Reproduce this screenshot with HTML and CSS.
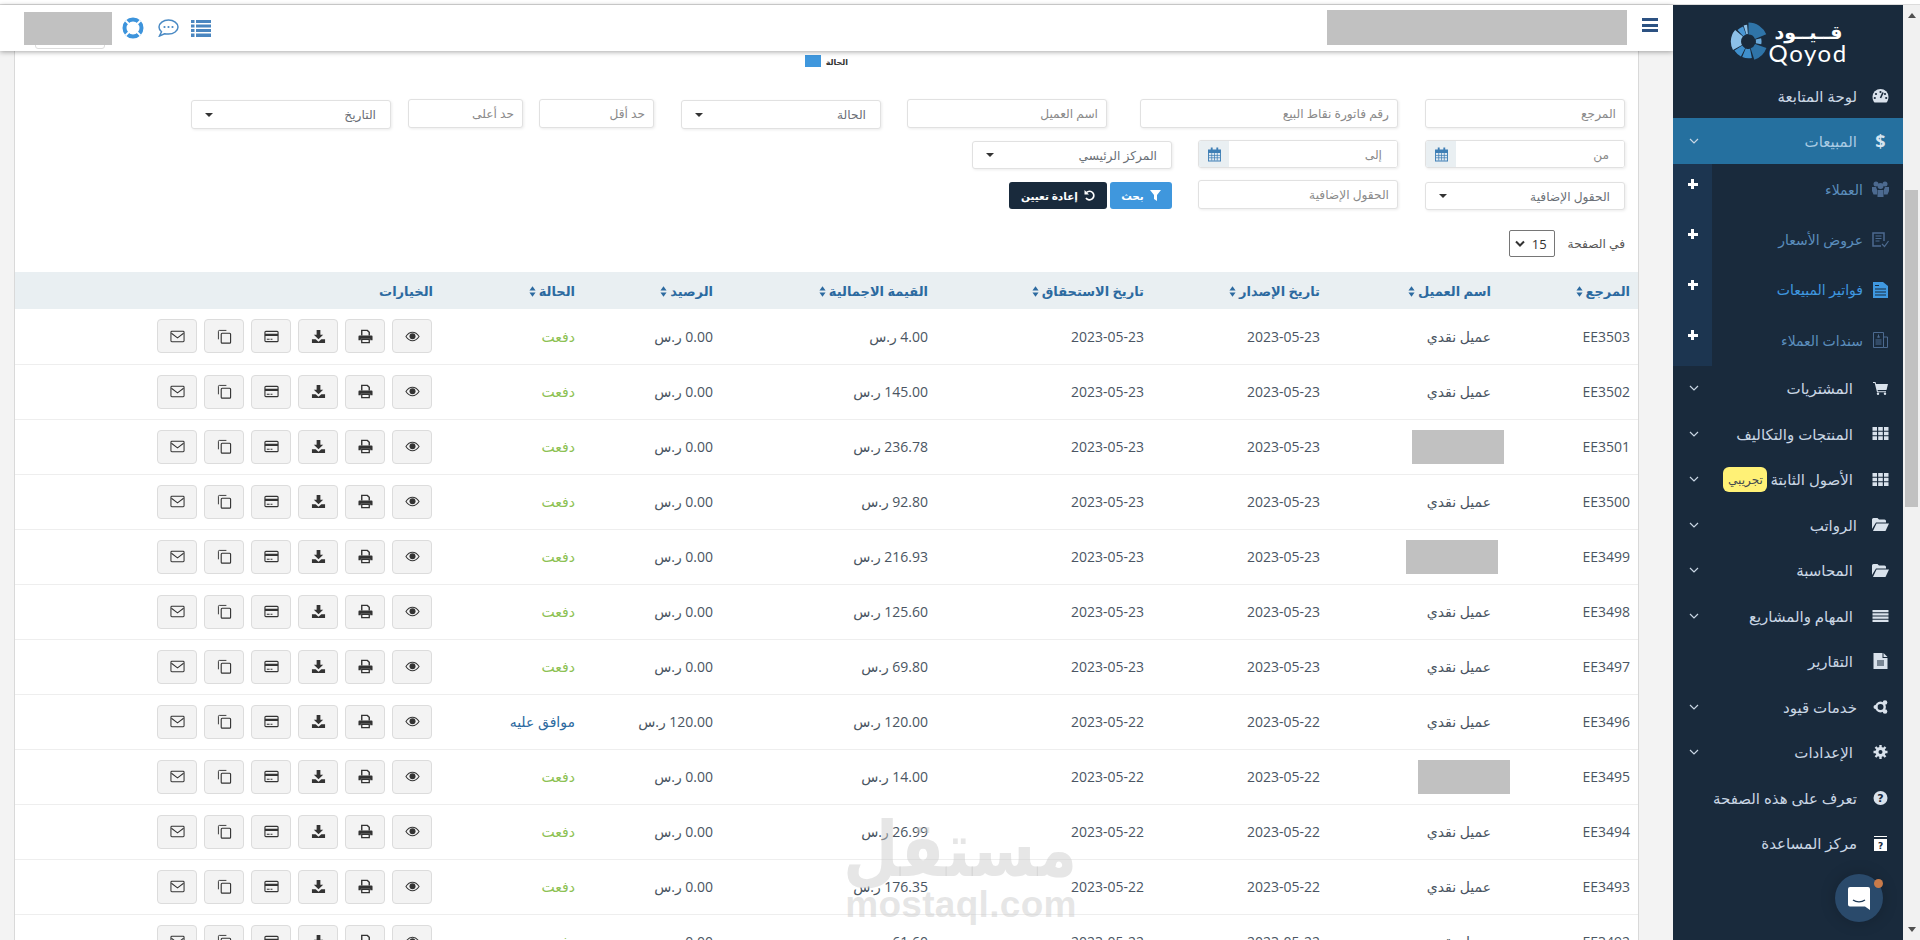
FILE: index.html
```html
<!DOCTYPE html>
<html lang="ar" dir="rtl">
<head>
<meta charset="utf-8">
<title>قيود - فواتير المبيعات</title>
<link rel="stylesheet" href="styles.css">
</head>
<body>
<svg class="defs" width="0" height="0" aria-hidden="true">
  <symbol id="i-eye" viewBox="0 0 16 16"><path d="M1 8c2-3 4.300-4.500 7-4.500S13 5 15 8c-2 3-4.300 4.500-7 4.500S3 11 1 8z" fill="none" stroke="currentColor" stroke-width="1.100"/><circle cx="8" cy="7.800" r="3.200" fill="currentColor"/></symbol>
  <symbol id="i-print" viewBox="0 0 16 16"><path d="M4 7V1.500h6l2 2V7" fill="none" stroke="currentColor" stroke-width="1.500"/><path d="M1.500 7h13a1 1 0 0 1 1 1v4h-2.500v-1.500H3V12H.5V8a1 1 0 0 1 1-1z" fill="currentColor"/><path d="M4 11h8v3.500H4z" fill="none" stroke="currentColor" stroke-width="1.400"/></symbol>
  <symbol id="i-down" viewBox="0 0 16 16"><path d="M6 1h4v5h3L8 11 3 6h3z" fill="currentColor"/><path d="M1 11h4l3 2.500 3-2.500h4v4H1z" fill="currentColor"/></symbol>
  <symbol id="i-card" viewBox="0 0 16 16"><rect x="1" y="2.500" width="14" height="11" rx="1" fill="none" stroke="currentColor" stroke-width="1.200"/><path d="M1 5h14v2.500H1zM3 10.500h3v1H3zM7 10.500h2v1H7z" fill="currentColor"/></symbol>
  <symbol id="i-copy" viewBox="0 0 16 16"><path d="M10 1.500H2.500a1 1 0 0 0-1 1V11" fill="none" stroke="currentColor" stroke-width="1"/><rect x="4.500" y="4.500" width="10" height="10.500" rx="1" fill="none" stroke="currentColor" stroke-width="1.200"/></symbol>
  <symbol id="i-mail" viewBox="0 0 16 16"><rect x="1" y="2.500" width="14" height="11" rx="1" fill="none" stroke="currentColor" stroke-width="1.100"/><path d="M1.500 4.500 8 9.500l6.500-5" fill="none" stroke="currentColor" stroke-width="1.100"/></symbol>
  <symbol id="i-sort" viewBox="0 0 8 12"><path d="M4 0l3.500 4.800h-7zM4 12L.5 7.200h7z" fill="currentColor"/></symbol>
  <symbol id="i-chev" viewBox="0 0 10 6"><path d="M1 1l4 4 4-4" fill="none" stroke="currentColor" stroke-width="1.200"/></symbol>
  <symbol id="i-chev-bold" viewBox="0 0 10 7"><path d="M1 1.500l4 4 4-4" fill="none" stroke="currentColor" stroke-width="2"/></symbol>
  <symbol id="i-grid" viewBox="0 0 16 13"><path d="M0 0h4.500v3.700H0zM5.700 0h4.600v3.700H5.700zM11.500 0H16v3.700h-4.500zM0 4.700h4.500v3.600H0zM5.700 4.700h4.600v3.600H5.700zM11.500 4.700H16v3.600h-4.500zM0 9.300h4.500V13H0zM5.700 9.300h4.600V13H5.700zM11.500 9.300H16V13h-4.500z" fill="currentColor"/></symbol>
  <symbol id="i-folder" viewBox="0 0 17 13"><path d="M0 1.500A1.500 1.500 0 0 1 1.500 0h4l1.500 1.500h5.500A1.500 1.500 0 0 1 14 3v1.500H4L0 11z" fill="currentColor"/><path d="M4.500 5.500H17l-3.500 7.500H1z" fill="currentColor"/></symbol>
</svg>

<div class="topline"></div>
<div class="app">
  <div class="scrollbar">
    <span class="arrow arrow-up"></span>
    <span class="thumb"></span>
    <span class="arrow arrow-down"></span>
  </div>

  <aside class="sidebar">
    <div class="logo">
      <svg class="logo-mark" width="41" height="41" viewBox="0 0 44 44">
        <g fill="none">
          <circle cx="22" cy="22" r="14" stroke="#2f74a8" stroke-width="13" pathLength="360" stroke-dasharray="68 292" stroke-dashoffset="0" transform="rotate(-90 22 22)"/>
          <circle cx="22" cy="22" r="11" stroke="#6aa9da" stroke-width="6" pathLength="360" stroke-dasharray="28 332" stroke-dashoffset="-75" transform="rotate(-90 22 22)"/>
          <circle cx="22" cy="22" r="14" stroke="#2f74a8" stroke-width="13" pathLength="360" stroke-dasharray="52 308" stroke-dashoffset="-110" transform="rotate(-90 22 22)"/>
          <circle cx="22" cy="22" r="13" stroke="#3f8fcc" stroke-width="10" pathLength="360" stroke-dasharray="34 326" stroke-dashoffset="-168" transform="rotate(-90 22 22)"/>
          <circle cx="22" cy="22" r="13" stroke="#3f8fcc" stroke-width="10" pathLength="360" stroke-dasharray="30 330" stroke-dashoffset="-207" transform="rotate(-90 22 22)"/>
          <circle cx="22" cy="22" r="13.500" stroke="#8cc0e8" stroke-width="11" pathLength="360" stroke-dasharray="70 290" stroke-dashoffset="-241" transform="rotate(-90 22 22)"/>
          <circle cx="22" cy="22" r="12.500" stroke="#4a97d4" stroke-width="9" pathLength="360" stroke-dasharray="24 336" stroke-dashoffset="-316" transform="rotate(-90 22 22)"/>
          <circle cx="22" cy="22" r="13" stroke="#8cc0e8" stroke-width="10" pathLength="360" stroke-dasharray="12 348" stroke-dashoffset="-343" transform="rotate(-90 22 22)"/>
        </g>
      </svg>
      <div class="logo-text">
        <span class="logo-ar">قــيــود</span>
        <span class="logo-en">Qoyod</span>
      </div>
    </div>
    <nav class="menu">
      <a class="item item-first">
        <svg class="ico" width="16" height="14" viewBox="0 0 16 14"><path d="M8 0a8 8 0 0 1 8 8c0 2.200-.8 4.200-2 5.500H2C.8 12.200 0 10.200 0 8a8 8 0 0 1 8-8z" fill="currentColor"/><circle cx="8" cy="3" r="1.100" fill="#192a3c"/><circle cx="3.500" cy="5" r="1.100" fill="#192a3c"/><circle cx="12.500" cy="5" r="1.100" fill="#192a3c"/><circle cx="2.300" cy="9" r="1.100" fill="#192a3c"/><circle cx="13.700" cy="9" r="1.100" fill="#192a3c"/><path d="M10.500 3.500 8 9" stroke="#192a3c" stroke-width="1.600"/></svg>
        <span class="label">لوحة المتابعة</span>
      </a>
      <a class="item item-active">
        <span class="ico dollar">$</span>
        <span class="label">المبيعات</span>
        <svg class="chev"><use href="#i-chev"/></svg>
      </a>
      <div class="sub">
        <a class="sub-item">
          <svg class="sub-ico" width="17" height="16" viewBox="0 0 17 16"><circle cx="4" cy="3" r="2.500" fill="currentColor"/><circle cx="13" cy="3" r="2.500" fill="currentColor"/><circle cx="8.500" cy="5" r="3" fill="currentColor"/><path d="M0 6h4l1 2.500v5H1.500L0 10zM17 6h-4l-1 2.500v5h3.500L17 10zM5.500 9h6v7h-6z" fill="currentColor"/></svg>
          <span class="sub-label">العملاء</span>
          <span class="plus-cell"><span class="plus"></span></span>
        </a>
        <a class="sub-item">
          <svg class="sub-ico" width="17" height="16" viewBox="0 0 17 16"><path d="M12 9V1H1v13h8" fill="none" stroke="currentColor" stroke-width="1.500"/><path d="M3.500 4h6M3.500 6.500h6M3.500 9h4" stroke="currentColor"/><path d="M10 12l2.500 2.500L16.500 9" fill="none" stroke="currentColor" stroke-width="1.200"/></svg>
          <span class="sub-label">عروض الأسعار</span>
          <span class="plus-cell"><span class="plus"></span></span>
        </a>
        <a class="sub-item sub-current">
          <svg class="sub-ico" width="15" height="16" viewBox="0 0 15 16"><path d="M0 0h10l5 4v12H0z" fill="currentColor"/><path d="M2 7h11M2 10h11M2 13h11M6 3.500H2" stroke="#192a3c" stroke-width="1.200"/></svg>
          <span class="sub-label">فواتير المبيعات</span>
          <span class="plus-cell"><span class="plus"></span></span>
        </a>
        <a class="sub-item">
          <svg class="sub-ico" width="16" height="16" viewBox="0 0 16 16"><path d="M1 .5h10v15H1zM11 5h4v10.500h-4" fill="none" stroke="currentColor"/><path d="M3 8h6M3 10h6M3 12h6M4.500 5h3M6 2.500v3" stroke="currentColor"/></svg>
          <span class="sub-label">سندات العملاء</span>
          <span class="plus-cell"><span class="plus"></span></span>
        </a>
      </div>
      <a class="item">
        <svg class="ico" width="15" height="13" viewBox="0 0 15 13"><path d="M0 0h2.500l.6 2H15l-1.500 6H4.600l.3 1.300H13v1H4L1.700 1H0z" fill="currentColor"/><circle cx="5" cy="11.800" r="1.200" fill="currentColor"/><circle cx="12" cy="11.800" r="1.200" fill="currentColor"/></svg>
        <span class="label label-in">المشتريات</span>
        <svg class="chev"><use href="#i-chev"/></svg>
      </a>
      <a class="item">
        <svg class="ico" width="16" height="13"><use href="#i-grid"/></svg>
        <span class="label label-in">المنتجات والتكاليف</span>
        <svg class="chev"><use href="#i-chev"/></svg>
      </a>
      <a class="item">
        <svg class="ico" width="16" height="13"><use href="#i-grid"/></svg>
        <span class="label label-in">الأصول الثابتة</span>
        <span class="badge">تجريبي</span>
        <svg class="chev"><use href="#i-chev"/></svg>
      </a>
      <a class="item">
        <svg class="ico" width="17" height="13"><use href="#i-folder"/></svg>
        <span class="label">الرواتب</span>
        <svg class="chev"><use href="#i-chev"/></svg>
      </a>
      <a class="item">
        <svg class="ico" width="17" height="13"><use href="#i-folder"/></svg>
        <span class="label label-in">المحاسبة</span>
        <svg class="chev"><use href="#i-chev"/></svg>
      </a>
      <a class="item">
        <svg class="ico" width="16" height="12" viewBox="0 0 16 12"><path d="M0 0h16v2.200H0zM0 3.300h16v2.200H0zM0 6.600h16v2.200H0zM0 9.800h16V12H0z" fill="currentColor"/></svg>
        <span class="label label-in">المهام والمشاريع</span>
        <svg class="chev"><use href="#i-chev"/></svg>
      </a>
      <a class="item">
        <svg class="ico" width="14" height="16" viewBox="0 0 14 16"><path d="M0 0h9v5h5v11H0z" fill="currentColor"/><path d="M10 0l4 4h-4z" fill="currentColor"/><path d="M3.500 8h7M3.500 10h7M3.500 12h7" stroke="#192a3c"/></svg>
        <span class="label label-in">التقارير</span>
      </a>
      <a class="item">
        <svg class="ico" width="14" height="14" viewBox="0 0 14 14"><circle cx="7" cy="7" r="4.200" fill="none" stroke="currentColor" stroke-width="2.400"/><circle cx="11.500" cy="2.500" r="2.300" fill="currentColor"/><circle cx="11.500" cy="11.500" r="2.300" fill="currentColor"/><circle cx="2" cy="7" r="2" fill="currentColor"/></svg>
        <span class="label">خدمات قيود</span>
        <svg class="chev"><use href="#i-chev"/></svg>
      </a>
      <a class="item">
        <svg class="ico" width="14" height="14" viewBox="0 0 14 14"><circle cx="7" cy="7" r="3.600" fill="none" stroke="currentColor" stroke-width="3"/><path d="M7 0v14M0 7h14M2 2l10 10M12 2L2 12" stroke="currentColor" stroke-width="2.400"/><circle cx="7" cy="7" r="2" fill="#192a3c"/></svg>
        <span class="label label-in">الإعدادات</span>
        <svg class="chev"><use href="#i-chev"/></svg>
      </a>
      <a class="item">
        <svg class="ico" width="14" height="14" viewBox="0 0 14 14"><circle cx="7" cy="7" r="7" fill="currentColor"/><text x="7" y="11" text-anchor="middle" class="ico-q">?</text></svg>
        <span class="label">تعرف على هذه الصفحة</span>
      </a>
      <a class="item">
        <svg class="ico" width="13" height="15" viewBox="0 0 13 15"><path d="M0 3h13v12H0z" fill="#fff"/><path d="M0 .5h13" stroke="#fff"/><text x="6.500" y="13" text-anchor="middle" class="ico-h">?</text></svg>
        <span class="label">مركز المساعدة</span>
      </a>
    </nav>
  </aside>

  <main class="main">
    <header class="header">
      <button class="burger" aria-label="menu"><span></span><span></span><span></span></button>
      <div class="redact redact-company"></div>
      <div class="header-tools">
        <svg width="20" height="17" viewBox="0 0 20 17" class="tool tool-list"><path d="M0 0h3.500v3H0zM5 0h15v3H5zM0 4.500h3.500v3H0zM5 4.500h15v3H5zM0 9h3.500v3H0zM5 9h15v3H5zM0 13.500h3.500V17H0zM5 13.500h15V17H5z" fill="currentColor"/></svg>
        <svg width="21" height="18" viewBox="0 0 21 18" class="tool tool-chat"><path d="M10.500 1C5.300 1 1 4.100 1 8c0 1.900 1 3.500 2.500 4.800L1.500 17l5-2.300c1.200.3 2.600.4 4 .4 5.200 0 9.500-3.200 9.500-7.100S15.700 1 10.500 1z" fill="none" stroke="currentColor" stroke-width="1.500"/><circle cx="6.500" cy="8" r="1.100" fill="currentColor"/><circle cx="10.500" cy="8" r="1.100" fill="currentColor"/><circle cx="14.500" cy="8" r="1.100" fill="currentColor"/></svg>
        <svg width="22" height="22" viewBox="0 0 22 22" class="tool tool-ring"><circle cx="11" cy="11" r="8.500" fill="none" stroke="currentColor" stroke-width="4"/><path d="M3.500 3.500l4 4M18.500 3.500l-4 4M3.500 18.500l4-4M18.500 18.500l-4-4" stroke="#fff" stroke-width="1.800"/></svg>
        <div class="account">
          <span class="account-box"></span>
          <div class="redact redact-account"></div>
        </div>
      </div>
    </header>

    <section class="panel">
      <div class="legend"><span class="legend-text">الحالة</span><span class="legend-swatch"></span></div>

      <div class="filter-row row-one">
        <input class="field w-200" placeholder="المرجع">
        <input class="field w-258 ms-27" placeholder="رقم فاتورة نقاط البيع">
        <input class="field w-200 ms-33" placeholder="اسم العميل">
        <div class="select w-200 ms-26"><span>الحالة</span><i class="caret"></i></div>
        <input class="field w-115 ms-27" placeholder="حد أقل">
        <input class="field w-115 ms-16" placeholder="حد أعلى">
        <div class="select w-200 ms-17"><span>التاريخ</span><i class="caret"></i></div>
      </div>
      <div class="filter-row row-two">
        <div class="date w-200"><input class="date-input" placeholder="من"><span class="addon"><svg width="13" height="15" viewBox="0 0 14 15"><path d="M0 2h14v13H0z" fill="#3f7fb5"/><path d="M1 6h12v8H1z" fill="#dfe9f1"/><path d="M1 8.500h12M1 11h12M4 6v8M7 6v8M10 6v8" stroke="#3f7fb5" stroke-width=".8"/><path d="M3 0h2v3H3zM9 0h2v3H9z" fill="#3f7fb5"/></svg></span></div>
        <div class="date w-200 ms-27"><input class="date-input" placeholder="إلى"><span class="addon"><svg width="13" height="15" viewBox="0 0 14 15"><path d="M0 2h14v13H0z" fill="#3f7fb5"/><path d="M1 6h12v8H1z" fill="#dfe9f1"/><path d="M1 8.500h12M1 11h12M4 6v8M7 6v8M10 6v8" stroke="#3f7fb5" stroke-width=".8"/><path d="M3 0h2v3H3zM9 0h2v3H9z" fill="#3f7fb5"/></svg></span></div>
        <div class="select w-200 ms-26"><span>المركز الرئيسي</span><i class="caret"></i></div>
      </div>
      <div class="filter-row row-three">
        <div class="select w-200"><span>الحقول الإضافية</span><i class="caret"></i></div>
        <input class="field field-up w-200 ms-27" placeholder="الحقول الإضافية">
        <div class="actions ms-26">
          <button class="btn btn-search"><svg width="11" height="11" viewBox="0 0 11 11"><path d="M0 0h11L7 5v6L4 9V5z" fill="#fff"/></svg>بحث</button>
          <button class="btn btn-reset"><svg width="11" height="11" viewBox="0 0 11 11"><path d="M2.500 2.500A4.300 4.300 0 1 1 2 8" fill="none" stroke="#fff" stroke-width="1.700"/><path d="M.5 0v4.500H5z" fill="#fff"/></svg>إعادة تعيين</button>
        </div>
      </div>
      <div class="per-page">
        <span>في الصفحة</span>
        <div class="page-size"><span class="num">15</span><svg width="10" height="7"><use href="#i-chev-bold"/></svg></div>
      </div>

      <table class="grid">
        <colgroup><col class="c1"><col class="c2"><col class="c3"><col class="c4"><col class="c5"><col class="c6"><col class="c7"><col></colgroup>
        <thead>
          <tr>
            <th>المرجع<svg class="sort"><use href="#i-sort"/></svg></th>
            <th>اسم العميل<svg class="sort"><use href="#i-sort"/></svg></th>
            <th>تاريخ الإصدار<svg class="sort"><use href="#i-sort"/></svg></th>
            <th>تاريخ الاستحقاق<svg class="sort"><use href="#i-sort"/></svg></th>
            <th>القيمة الاجمالية<svg class="sort"><use href="#i-sort"/></svg></th>
            <th>الرصيد<svg class="sort"><use href="#i-sort"/></svg></th>
            <th>الحالة<svg class="sort"><use href="#i-sort"/></svg></th>
            <th>الخيارات</th>
          </tr>
        </thead>
        <tbody>
          <tr><td>EE3503</td><td>عميل نقدي</td><td>2023-05-23</td><td>2023-05-23</td><td>4.00 ر.س</td><td>0.00 ر.س</td><td class="paid">دفعت</td><td class="ops"><a class="op"><svg><use href="#i-eye"/></svg></a><a class="op"><svg><use href="#i-print"/></svg></a><a class="op"><svg><use href="#i-down"/></svg></a><a class="op"><svg><use href="#i-card"/></svg></a><a class="op"><svg><use href="#i-copy"/></svg></a><a class="op"><svg><use href="#i-mail"/></svg></a></td></tr>
          <tr><td>EE3502</td><td>عميل نقدي</td><td>2023-05-23</td><td>2023-05-23</td><td>145.00 ر.س</td><td>0.00 ر.س</td><td class="paid">دفعت</td><td class="ops"><a class="op"><svg><use href="#i-eye"/></svg></a><a class="op"><svg><use href="#i-print"/></svg></a><a class="op"><svg><use href="#i-down"/></svg></a><a class="op"><svg><use href="#i-card"/></svg></a><a class="op"><svg><use href="#i-copy"/></svg></a><a class="op"><svg><use href="#i-mail"/></svg></a></td></tr>
          <tr><td>EE3501</td><td class="hid"><span class="redact redact-a"></span></td><td>2023-05-23</td><td>2023-05-23</td><td>236.78 ر.س</td><td>0.00 ر.س</td><td class="paid">دفعت</td><td class="ops"><a class="op"><svg><use href="#i-eye"/></svg></a><a class="op"><svg><use href="#i-print"/></svg></a><a class="op"><svg><use href="#i-down"/></svg></a><a class="op"><svg><use href="#i-card"/></svg></a><a class="op"><svg><use href="#i-copy"/></svg></a><a class="op"><svg><use href="#i-mail"/></svg></a></td></tr>
          <tr><td>EE3500</td><td>عميل نقدي</td><td>2023-05-23</td><td>2023-05-23</td><td>92.80 ر.س</td><td>0.00 ر.س</td><td class="paid">دفعت</td><td class="ops"><a class="op"><svg><use href="#i-eye"/></svg></a><a class="op"><svg><use href="#i-print"/></svg></a><a class="op"><svg><use href="#i-down"/></svg></a><a class="op"><svg><use href="#i-card"/></svg></a><a class="op"><svg><use href="#i-copy"/></svg></a><a class="op"><svg><use href="#i-mail"/></svg></a></td></tr>
          <tr><td>EE3499</td><td class="hid"><span class="redact redact-b"></span></td><td>2023-05-23</td><td>2023-05-23</td><td>216.93 ر.س</td><td>0.00 ر.س</td><td class="paid">دفعت</td><td class="ops"><a class="op"><svg><use href="#i-eye"/></svg></a><a class="op"><svg><use href="#i-print"/></svg></a><a class="op"><svg><use href="#i-down"/></svg></a><a class="op"><svg><use href="#i-card"/></svg></a><a class="op"><svg><use href="#i-copy"/></svg></a><a class="op"><svg><use href="#i-mail"/></svg></a></td></tr>
          <tr><td>EE3498</td><td>عميل نقدي</td><td>2023-05-23</td><td>2023-05-23</td><td>125.60 ر.س</td><td>0.00 ر.س</td><td class="paid">دفعت</td><td class="ops"><a class="op"><svg><use href="#i-eye"/></svg></a><a class="op"><svg><use href="#i-print"/></svg></a><a class="op"><svg><use href="#i-down"/></svg></a><a class="op"><svg><use href="#i-card"/></svg></a><a class="op"><svg><use href="#i-copy"/></svg></a><a class="op"><svg><use href="#i-mail"/></svg></a></td></tr>
          <tr><td>EE3497</td><td>عميل نقدي</td><td>2023-05-23</td><td>2023-05-23</td><td>69.80 ر.س</td><td>0.00 ر.س</td><td class="paid">دفعت</td><td class="ops"><a class="op"><svg><use href="#i-eye"/></svg></a><a class="op"><svg><use href="#i-print"/></svg></a><a class="op"><svg><use href="#i-down"/></svg></a><a class="op"><svg><use href="#i-card"/></svg></a><a class="op"><svg><use href="#i-copy"/></svg></a><a class="op"><svg><use href="#i-mail"/></svg></a></td></tr>
          <tr><td>EE3496</td><td>عميل نقدي</td><td>2023-05-22</td><td>2023-05-22</td><td>120.00 ر.س</td><td>120.00 ر.س</td><td class="approved">موافق عليه</td><td class="ops"><a class="op"><svg><use href="#i-eye"/></svg></a><a class="op"><svg><use href="#i-print"/></svg></a><a class="op"><svg><use href="#i-down"/></svg></a><a class="op"><svg><use href="#i-card"/></svg></a><a class="op"><svg><use href="#i-copy"/></svg></a><a class="op"><svg><use href="#i-mail"/></svg></a></td></tr>
          <tr><td>EE3495</td><td class="hid"><span class="redact redact-c"></span></td><td>2023-05-22</td><td>2023-05-22</td><td>14.00 ر.س</td><td>0.00 ر.س</td><td class="paid">دفعت</td><td class="ops"><a class="op"><svg><use href="#i-eye"/></svg></a><a class="op"><svg><use href="#i-print"/></svg></a><a class="op"><svg><use href="#i-down"/></svg></a><a class="op"><svg><use href="#i-card"/></svg></a><a class="op"><svg><use href="#i-copy"/></svg></a><a class="op"><svg><use href="#i-mail"/></svg></a></td></tr>
          <tr><td>EE3494</td><td>عميل نقدي</td><td>2023-05-22</td><td>2023-05-22</td><td>26.99 ر.س</td><td>0.00 ر.س</td><td class="paid">دفعت</td><td class="ops"><a class="op"><svg><use href="#i-eye"/></svg></a><a class="op"><svg><use href="#i-print"/></svg></a><a class="op"><svg><use href="#i-down"/></svg></a><a class="op"><svg><use href="#i-card"/></svg></a><a class="op"><svg><use href="#i-copy"/></svg></a><a class="op"><svg><use href="#i-mail"/></svg></a></td></tr>
          <tr><td>EE3493</td><td>عميل نقدي</td><td>2023-05-22</td><td>2023-05-22</td><td>176.35 ر.س</td><td>0.00 ر.س</td><td class="paid">دفعت</td><td class="ops"><a class="op"><svg><use href="#i-eye"/></svg></a><a class="op"><svg><use href="#i-print"/></svg></a><a class="op"><svg><use href="#i-down"/></svg></a><a class="op"><svg><use href="#i-card"/></svg></a><a class="op"><svg><use href="#i-copy"/></svg></a><a class="op"><svg><use href="#i-mail"/></svg></a></td></tr>
          <tr><td>EE3492</td><td>عميل نقدي</td><td>2023-05-22</td><td>2023-05-22</td><td>61.60 ر.س</td><td>0.00 ر.س</td><td class="paid">دفعت</td><td class="ops"><a class="op"><svg><use href="#i-eye"/></svg></a><a class="op"><svg><use href="#i-print"/></svg></a><a class="op"><svg><use href="#i-down"/></svg></a><a class="op"><svg><use href="#i-card"/></svg></a><a class="op"><svg><use href="#i-copy"/></svg></a><a class="op"><svg><use href="#i-mail"/></svg></a></td></tr>
        </tbody>
      </table>
    </section>
  </main>
</div>

<div class="watermark">
  <div class="wm-ar">مستقل</div>
  <div class="wm-en">mostaql.com</div>
</div>

<div class="chat">
  <svg width="24" height="25" viewBox="0 0 24 25"><path d="M3 1h18a2 2 0 0 1 2 2v21l-5-3.500H3a2 2 0 0 1-2-2V3a2 2 0 0 1 2-2z" fill="#fff"/><path d="M6 14c3.500 2.500 8.500 2.500 12 0" fill="none" stroke="#1f3a56" stroke-width="1.400"/></svg>
  <span class="chat-dot"></span>
</div>
</body>
</html>
```
FILE: styles.css
```css
* { box-sizing: border-box; }
html, body { margin: 0; height: 940px; overflow: hidden; }
body {
  background: #f3f3f3;
  color: #4a5562;
  font-family: "Open Sans", "DejaVu Sans", sans-serif;
  font-size: 12px;
}
.defs { position: absolute; }
.topline { height: 5px; background: #fff; border-bottom: 1px solid #dcdcdc; }
.app { display: flex; height: 935px; }

/* scrollbar */
.scrollbar {
  width: 17px;
  flex: none;
  background: #f1f1f1;
  display: flex;
  flex-direction: column;
  align-items: center;
  padding-top: 8px;
}
.arrow { width: 0; height: 0; border-inline: 4px solid transparent; }
.arrow-up { border-bottom: 5px solid #505050; }
.arrow-down { border-top: 5px solid #505050; margin-top: 420px; }
.thumb { width: 13px; height: 317px; background: #c1c1c1; margin-top: 172px; }

/* sidebar */
.sidebar {
  width: 230px;
  flex: none;
  background: #192a3c;
  color: #c9d6e4;
  position: relative;
  z-index: 3;
}
.logo {
  height: 68px;
  display: flex;
  flex-direction: row-reverse;
  justify-content: center;
  align-items: center;
  padding-top: 4px;
}
.logo-text { display: flex; flex-direction: column; align-items: stretch; width: 80px; color: #fff; }
.logo-ar { font-size: 19px; line-height: 22px; font-weight: 700; text-align: center; white-space: nowrap; }
.logo-en { font-family: Lato, sans-serif; font-size: 24px; line-height: 19px; letter-spacing: 1.600px; direction: ltr; }
.menu { display: flex; flex-direction: column; }
.item {
  height: 45.500px;
  display: flex;
  align-items: center;
  padding-inline-start: 14px;
  position: relative;
  font-size: 15px;
  white-space: nowrap;
}
.item-first { height: 45px; }
.item-active { height: 46px; background: #25709f; color: #a9cbe4; }
.ico { width: 17px; flex: none; color: #d9e2ec; }
.dollar { font-weight: 700; font-size: 18px; text-align: center; color: #d6e4ef; }
.ico-q { font: 700 11px "DejaVu Sans", sans-serif; fill: #192a3c; }
.ico-h { font: 700 9px "DejaVu Sans", sans-serif; fill: #192a3c; }
.label { margin-inline-start: 15px; }
.label-in { margin-inline-start: 19px; }
.chev { position: absolute; left: 16px; top: 50%; width: 10px; height: 6px; margin-top: -3px; color: #c9d6e4; }
.badge {
  margin-inline-start: 3px;
  width: 44px;
  height: 25px;
  background: #fff176;
  border-radius: 6px;
  color: #44494f;
  font-size: 12px;
  display: flex;
  align-items: center;
  justify-content: center;
}
.sub { display: flex; flex-direction: column; }
.sub-item {
  height: 50.400px;
  display: flex;
  align-items: center;
  padding-inline-start: 14px;
  position: relative;
  color: #5b8ebd;
  font-size: 14px;
}
.sub-ico { width: 17px; flex: none; color: #4c6a90; }
.sub-label { margin-inline-start: 9px; }
.sub-current { color: #3f98e0; }
.sub-current .sub-ico { color: #3f98e0; }
.plus-cell {
  position: absolute;
  left: 0;
  top: 0;
  bottom: 0;
  width: 39px;
  background: #1c3550;
  display: flex;
  justify-content: center;
  padding-top: 15px;
}
.plus {
  width: 10px;
  height: 10px;
  background:
    linear-gradient(#fff, #fff) center / 10px 3px no-repeat,
    linear-gradient(#fff, #fff) center / 3px 10px no-repeat;
}

/* main */
.main { flex: 1; min-width: 0; display: flex; flex-direction: column; }
.header {
  height: 46px;
  flex: none;
  background: #fff;
  box-shadow: 0 1px 5px rgba(0, 0, 0, .35);
  display: flex;
  align-items: center;
  padding-inline: 15px 24px;
  position: relative;
  z-index: 2;
}
.burger {
  width: 16px;
  height: 14px;
  padding: 0;
  border: 0;
  background: none;
  display: flex;
  flex-direction: column;
  justify-content: space-between;
  margin-top: -6px;
}
.burger span { height: 3px; background: #2c5282; display: block; }
.redact { background: #c1c1c1; display: block; }
.redact-company { width: 300px; height: 35px; margin-inline-start: 15px; margin-top: -1px; }
.header-tools { margin-inline-start: auto; display: flex; align-items: center; }
.tool { flex: none; }
.tool-list { color: #4a86c0; }
.tool-chat { color: #4a8ac4; margin-inline-start: 12px; }
.tool-ring { color: #3d94dc; margin-inline-start: 14px; }
.account { width: 88px; height: 37px; margin-inline-start: 10px; position: relative; align-self: flex-start; margin-top: 4px; }
.account-box { position: absolute; right: 7px; left: 11px; bottom: 0; height: 14px; border: 1px solid #ddd; border-radius: 3px; }
.redact-account { position: absolute; inset: 0 0 4px; }

.panel {
  flex: 1;
  margin-inline: 34px 14px;
  background: #fff;
  border-inline: 1px solid #d9d9d9;
  min-height: 0;
  overflow: hidden;
  padding-top: 4px;
}
.legend { display: flex; align-items: center; height: 12px; gap: 5px; margin-inline-start: 790px; font-size: 8px; font-weight: 700; color: #333; }
.legend-swatch { width: 16px; height: 12px; background: #3f97dd; }

.filter-row { display: flex; padding-inline-start: 13px; align-items: flex-start; }
.row-one { margin-top: 32px; }
.row-two { margin-top: 11px; }
.row-three { margin-top: 12px; }
.row-two .select, .row-three .select { height: 28px; }
.w-258 { width: 258px; } .w-200 { width: 200px; } .w-115 { width: 115px; }
.ms-16 { margin-inline-start: 16px; } .ms-17 { margin-inline-start: 17px; } .ms-26 { margin-inline-start: 26px; } .ms-27 { margin-inline-start: 27px; } .ms-33 { margin-inline-start: 33px; }
.field, .date-input {
  font: inherit;
  font-size: 12.200px;
  color: #555;
  outline: 0;
}
.field {
  height: 29px;
  padding-inline: 8px;
  border: 1px solid #e1e1e1;
  border-radius: 3px;
  box-shadow: 1px 1px 3px rgba(0, 0, 0, .08);
  background: #fff;
}
::placeholder { color: #8a8a8a; opacity: 1; }
.field-up { margin-top: -1px; }
.select {
  height: 29px;
  flex: none;
  display: flex;
  align-items: center;
  justify-content: space-between;
  padding-inline: 14px 13px;
  border: 1px solid #e1e1e1;
  border-radius: 3px;
  box-shadow: 1px 1px 3px rgba(0, 0, 0, .08);
  background: #fff;
  font-size: 12.200px;
  color: #6a6f76;
  margin-top: 1px;
}
.caret { width: 0; height: 0; border-inline: 4px solid transparent; border-top: 4px solid #333; }
.date {
  height: 28px;
  display: flex;
  border: 1px solid #e1e1e1;
  border-radius: 3px;
  box-shadow: 1px 1px 3px rgba(0, 0, 0, .08);
  overflow: hidden;
}
.date-input { flex: 1; min-width: 0; border: 0; padding-inline: 15px 5px; background: #fff; }
.addon { width: 30px; flex: none; background: #e9eff2; display: flex; align-items: center; justify-content: center; }
.actions { display: flex; gap: 3px; margin-top: 1px; }
.btn {
  height: 27px;
  border: 0;
  border-radius: 3px;
  color: #fff;
  font: inherit;
  font-size: 10.500px;
  font-weight: 700;
  display: flex;
  align-items: center;
  justify-content: center;
  gap: 6px;
  padding: 0;
}
.btn-search { width: 62px; background: #3f97dd; }
.btn-reset { width: 98px; background: #192a3c; }
.per-page {
  display: flex;
  align-items: center;
  gap: 13px;
  padding-inline-start: 13px;
  margin-top: 20px;
  height: 27px;
  font-size: 12.200px;
  color: #555;
}
.page-size {
  width: 46px;
  height: 27px;
  border: 1px solid #767676;
  border-radius: 2px;
  display: flex;
  align-items: center;
  justify-content: space-between;
  padding-inline: 5px 5px;
  color: #333;
}
.num { font-size: 13px; margin-inline-start: 2px; }

/* table */
.grid { width: 100%; border-collapse: collapse; table-layout: fixed; margin-top: 15px; }
.c1 { width: 123px; } .c2 { width: 171px; } .c3 { width: 176px; } .c4 { width: 216px; } .c5 { width: 215px; } .c6 { width: 138px; } .c7 { width: 142px; }
.grid th {
  height: 37px;
  background: #e9eff2;
  color: #2c6aa0;
  font-size: 13px;
  font-weight: 700;
  text-align: right;
  padding: 0 24px 0 0;
  white-space: nowrap;
}
.grid th:first-child, .grid td:first-child { padding-right: 8px; }
.sort { display: inline-block; width: 7px; height: 11px; margin-inline-start: 3px; color: #2c6aa0; vertical-align: -1px; }
.grid td {
  height: 55px;
  padding: 0 24px 0 0;
  border-bottom: 1px solid #eee;
  text-align: right;
  font-size: 14px;
  color: #4a5562;
  white-space: nowrap;
}
.grid td.paid { color: #8cc152; }
.grid td.approved { color: #2c6aa0; }
.grid td.ops { padding-inline-start: 25px; font-size: 0; }
.hid .redact { width: 92px; height: 34px; }
.redact-a { margin-inline-start: -13px; }
.redact-b { margin-inline-start: -7px; }
.redact-c { margin-inline-start: -19px; }
.op {
  display: inline-flex;
  width: 40px;
  height: 34px;
  align-items: center;
  justify-content: center;
  margin-inline-end: 7px;
  background: #f3f3f3;
  border: 1px solid #dcdcdc;
  border-radius: 4px;
  color: #333;
  vertical-align: middle;
}
.op svg { width: 15px; height: 15px; }

/* overlays */
.watermark {
  position: absolute;
  left: 845px;
  top: 812px;
  width: 232px;
  text-align: center;
  color: rgba(200, 200, 200, .45);
  font-weight: 700;
  pointer-events: none;
  z-index: 5;
}
.wm-ar { font-family: "DejaVu Sans", sans-serif; font-size: 64px; line-height: 76px; transform: scaleY(1.200); }
.wm-en { font-family: "Liberation Sans", sans-serif; font-size: 37px; line-height: 34px; letter-spacing: .3px; direction: ltr; }
.chat {
  position: absolute;
  left: 1835px;
  top: 874px;
  width: 48px;
  height: 48px;
  border-radius: 50%;
  background: #2a4a6b;
  display: flex;
  align-items: center;
  justify-content: center;
  z-index: 6;
  box-shadow: 0 0 16px rgba(0, 0, 0, .2);
}
.chat-dot { position: absolute; top: 5px; right: 0; width: 9px; height: 9px; border-radius: 50%; background: #c97b4a; }
```
